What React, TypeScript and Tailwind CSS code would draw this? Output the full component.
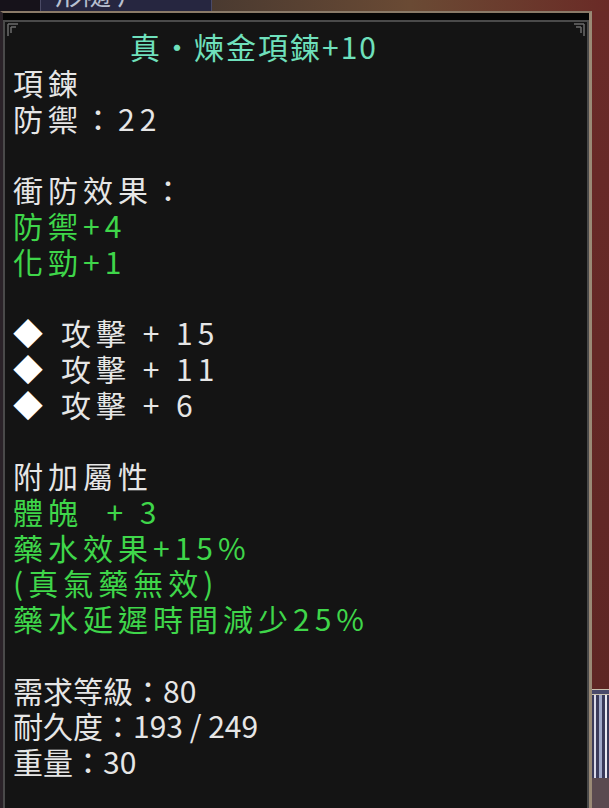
import React from "react";

type Line = { text: string; color?: "white" | "green"; bullet?: boolean; tight?: boolean };

const LINES: (Line | null)[] = [
  { text: "項鍊" },
  { text: "防禦：22" },
  null,
  { text: "衝防效果：" },
  { text: "防禦+4", color: "green" },
  { text: "化勁+1", color: "green" },
  null,
  { text: "攻擊 + 15", bullet: true },
  { text: "攻擊 + 11", bullet: true },
  { text: "攻擊 + 6", bullet: true },
  null,
  { text: "附加屬性" },
  { text: "體魄  + 3", color: "green" },
  { text: "藥水效果+15%", color: "green" },
  { text: "(真氣藥無效)", color: "green" },
  { text: "藥水延遲時間減少25%", color: "green" },
  null,
  { text: "需求等級：80", tight: true },
  { text: "耐久度：193 / 249", tight: true },
  { text: "重量：30", tight: true },
];

function Corner({ flip }: { flip?: boolean }) {
  return (
    <svg width="12" height="14" viewBox="0 0 12 14" className={flip ? "-scale-x-100" : ""}>
      <path d="M1 1h10M1 1v12M4 4h5M4 4v6" stroke="#6b6b6b" strokeWidth="1.5" fill="none" />
    </svg>
  );
}

export default function App() {
  return (
    <div
      className="flex h-[808px] w-[609px] flex-col overflow-hidden bg-[#5a2624]"
      style={{ fontFamily: '"Noto Sans CJK TC", "Noto Sans CJK SC", sans-serif' }}
    >
      {/* top strip of the window behind */}
      <div className="flex h-[11px] shrink-0">
        <div className="w-[40px] bg-[#16121a]" />
        <div className="w-[172px] overflow-hidden border-x border-[#4a4a66] bg-[#262640]">
          <div className="-mt-[22px] pl-[14px] text-[28px] leading-[30px] text-[#b8c0d0]">形隨 戶</div>
        </div>
        <div className="flex-1 bg-gradient-to-r from-[#4a3a30] via-[#6a4a34] to-[#6a2a26]" />
      </div>

      <div className="flex min-h-0 flex-1">
        {/* tooltip panel */}
        <div className="flex w-[592px] shrink-0 flex-col border-t-2 border-l-[3px] border-r-[3px] border-t-[#8a7a68] border-l-[#2a2228] border-r-[#9a8a76] bg-[#060606] pt-[7px]">
          <div className="flex flex-1 flex-col border-t-2 border-l-2 border-r-2 border-[#4a4a4a] bg-[#141414]">
            <div className="flex justify-between px-[2px] pt-[1px]">
              <Corner />
              <Corner flip />
            </div>
            <div className="-mt-[8px] pl-[8px] text-[30px] leading-[35.75px] tracking-[5px] text-[#e6e6e6]">
              <div className="pl-[117px] tracking-[2px] text-[#6fe0bc]">真·煉金項鍊+10</div>
              {LINES.map((l, i) =>
                l === null ? (
                  <div key={i} className="h-[35.75px]" />
                ) : (
                  <div
                    key={i}
                    className={`flex h-[35.75px] items-center whitespace-pre ${l.color === "green" ? "text-[#3fd64a]" : ""} ${l.tight ? "tracking-[0px]" : ""}`}
                  >
                    {l.bullet && <span className="mr-[18px] tracking-[0px] text-white">◆</span>}
                    {l.text}
                  </div>
                )
              )}
            </div>
          </div>
        </div>

        {/* background to the right */}
        <div className="flex flex-1 flex-col">
          <div className="h-[678px] bg-gradient-to-b from-[#6a2a28] to-[#5e2624]" />
          <div className="h-[6px] border-y border-[#c8c0b0] bg-[#4a4a6a]" />
          <div className="flex flex-1 gap-[3px] bg-[#3a3a5a] px-[2px]">
            <div className="w-[2px] bg-[#d8d8e8]" />
            <div className="w-[3px] bg-[#a0a8c8]" />
            <div className="w-[2px] bg-[#e8e8f0]" />
          </div>
          <div className="h-[30px] bg-[#5a4a50]" />
        </div>
      </div>
    </div>
  );
}
